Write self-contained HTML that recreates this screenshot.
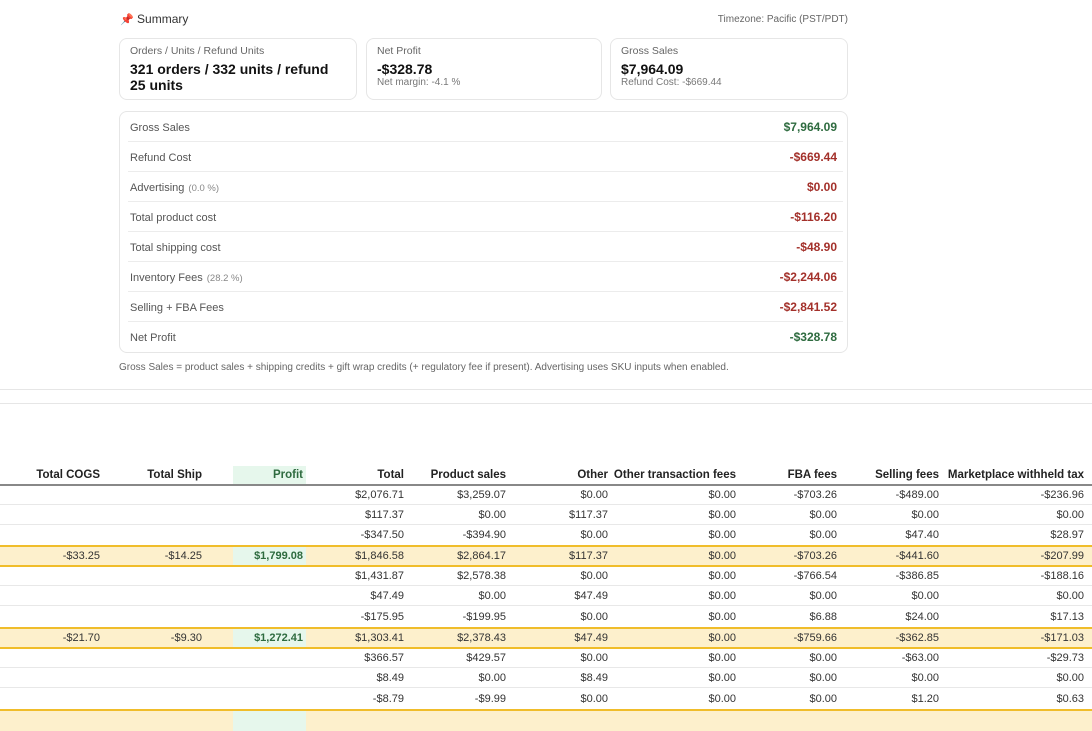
<!DOCTYPE html>
<html><head><meta charset="utf-8"><style>
*{margin:0;padding:0;box-sizing:border-box}
body{width:1092px;height:715px;overflow:hidden;background:#fff;font-family:"Liberation Sans",sans-serif;color:#222;position:relative}
.a{position:absolute}
.card{position:absolute;top:38px;height:62px;border:1px solid #e6e6e6;border-radius:8px;padding:6px 10px}
.card .l{font-size:10.5px;color:#666}
.card .v{font-size:14px;font-weight:bold;color:#111;margin-top:4px;line-height:16px}
.card .s{font-size:10px;color:#777}
.box{position:absolute;left:119px;top:111px;width:729px;height:242px;border:1px solid #e6e6e6;border-radius:8px}
.br{position:absolute;left:8px;right:4px;height:30px;border-bottom:1px solid #ececec;font-size:11px;color:#555}
.br span.t{position:absolute;left:2px;top:10px}
.br span.t small{font-size:9.5px;color:#888;margin-left:4px}
.br b{position:absolute;right:6px;top:8px;font-size:12px}
.g{color:#2e6b3f}.r{color:#a3302a}
.row{position:absolute;left:0;width:1092px;border-bottom:1px solid #e8e8e8;font-size:11px;color:#333}
.row span{position:absolute;top:50%;transform:translateY(-50%);text-align:right;white-space:nowrap}
.hl{background:#fdf0cc;border-top:2px solid #f0bd2a;border-bottom:2px solid #f0bd2a}
.pf{background:#e6f7ec;left:233px;width:73px;top:0;bottom:0;position:absolute}
.hdr span{font-weight:bold;font-size:11.5px;color:#222}
</style></head><body>
<div class="a" style="left:120px;top:12px;font-size:12px;color:#333"><span style="color:#d33;font-size:11px">📌</span>&nbsp;Summary</div>
<div class="a" style="right:244px;top:14px;font-size:10px;color:#666">Timezone: Pacific (PST/PDT)</div>
<div class="card" style="left:119px;width:238px"><div class="l">Orders / Units / Refund Units</div><div class="v">321 orders / 332 units / refund 25 units</div></div>
<div class="card" style="left:366px;width:236px"><div class="l">Net Profit</div><div class="v">-$328.78</div><div class="s">Net margin: -4.1 %</div></div>
<div class="card" style="left:610px;width:238px"><div class="l">Gross Sales</div><div class="v">$7,964.09</div><div class="s">Refund Cost: -$669.44</div></div>
<div class="box">
<div class="br" style="top:0"><span class="t">Gross Sales</span><b class="g">$7,964.09</b></div>
<div class="br" style="top:30px"><span class="t">Refund Cost</span><b class="r">-$669.44</b></div>
<div class="br" style="top:60px"><span class="t">Advertising<small>(0.0 %)</small></span><b class="r">$0.00</b></div>
<div class="br" style="top:90px"><span class="t">Total product cost</span><b class="r">-$116.20</b></div>
<div class="br" style="top:120px"><span class="t">Total shipping cost</span><b class="r">-$48.90</b></div>
<div class="br" style="top:150px"><span class="t">Inventory Fees<small>(28.2 %)</small></span><b class="r">-$2,244.06</b></div>
<div class="br" style="top:180px"><span class="t">Selling + FBA Fees</span><b class="r">-$2,841.52</b></div>
<div class="br" style="top:210px;border-bottom:none"><span class="t">Net Profit</span><b class="g">-$328.78</b></div>
</div>
<div class="a" style="left:119px;top:362px;font-size:10px;color:#666">Gross Sales = product sales + shipping credits + gift wrap credits (+ regulatory fee if present). Advertising uses SKU inputs when enabled.</div>
<div class="a" style="left:0;top:389px;width:1092px;height:1px;background:#e6e6e6"></div>
<div class="a" style="left:0;top:403px;width:1092px;height:1px;background:#e6e6e6"></div>

<div class="row hdr" style="top:466px;height:20px;border-bottom:2px solid #888"><div class="pf"></div>
<span style="right:992px">Total COGS</span><span style="right:890px">Total Ship</span><span style="right:789px;color:#2e6b3f">Profit</span><span style="right:688px">Total</span><span style="right:586px">Product sales</span><span style="right:484px">Other</span><span style="right:356px">Other transaction fees</span><span style="right:255px">FBA fees</span><span style="right:153px">Selling fees</span><span style="right:8px">Marketplace withheld tax</span></div>

<div class="row" style="top:486px;height:19px"><span style="right:688px">$2,076.71</span><span style="right:586px">$3,259.07</span><span style="right:484px">$0.00</span><span style="right:356px">$0.00</span><span style="right:255px">-$703.26</span><span style="right:153px">-$489.00</span><span style="right:8px">-$236.96</span></div>
<div class="row" style="top:505px;height:20px"><span style="right:688px">$117.37</span><span style="right:586px">$0.00</span><span style="right:484px">$117.37</span><span style="right:356px">$0.00</span><span style="right:255px">$0.00</span><span style="right:153px">$0.00</span><span style="right:8px">$0.00</span></div>
<div class="row" style="top:525px;height:20px;border-bottom:none"><span style="right:688px">-$347.50</span><span style="right:586px">-$394.90</span><span style="right:484px">$0.00</span><span style="right:356px">$0.00</span><span style="right:255px">$0.00</span><span style="right:153px">$47.40</span><span style="right:8px">$28.97</span></div>
<div class="row hl" style="top:545px;height:22px"><div class="pf"></div><span style="right:992px">-$33.25</span><span style="right:890px">-$14.25</span><span style="right:789px;color:#2e6b3f;font-weight:bold">$1,799.08</span><span style="right:688px">$1,846.58</span><span style="right:586px">$2,864.17</span><span style="right:484px">$117.37</span><span style="right:356px">$0.00</span><span style="right:255px">-$703.26</span><span style="right:153px">-$441.60</span><span style="right:8px">-$207.99</span></div>
<div class="row" style="top:567px;height:19px"><span style="right:688px">$1,431.87</span><span style="right:586px">$2,578.38</span><span style="right:484px">$0.00</span><span style="right:356px">$0.00</span><span style="right:255px">-$766.54</span><span style="right:153px">-$386.85</span><span style="right:8px">-$188.16</span></div>
<div class="row" style="top:586px;height:20px"><span style="right:688px">$47.49</span><span style="right:586px">$0.00</span><span style="right:484px">$47.49</span><span style="right:356px">$0.00</span><span style="right:255px">$0.00</span><span style="right:153px">$0.00</span><span style="right:8px">$0.00</span></div>
<div class="row" style="top:606px;height:21px;border-bottom:none"><span style="right:688px">-$175.95</span><span style="right:586px">-$199.95</span><span style="right:484px">$0.00</span><span style="right:356px">$0.00</span><span style="right:255px">$6.88</span><span style="right:153px">$24.00</span><span style="right:8px">$17.13</span></div>
<div class="row hl" style="top:627px;height:22px"><div class="pf"></div><span style="right:992px">-$21.70</span><span style="right:890px">-$9.30</span><span style="right:789px;color:#2e6b3f;font-weight:bold">$1,272.41</span><span style="right:688px">$1,303.41</span><span style="right:586px">$2,378.43</span><span style="right:484px">$47.49</span><span style="right:356px">$0.00</span><span style="right:255px">-$759.66</span><span style="right:153px">-$362.85</span><span style="right:8px">-$171.03</span></div>
<div class="row" style="top:649px;height:19px"><span style="right:688px">$366.57</span><span style="right:586px">$429.57</span><span style="right:484px">$0.00</span><span style="right:356px">$0.00</span><span style="right:255px">$0.00</span><span style="right:153px">-$63.00</span><span style="right:8px">-$29.73</span></div>
<div class="row" style="top:668px;height:20px"><span style="right:688px">$8.49</span><span style="right:586px">$0.00</span><span style="right:484px">$8.49</span><span style="right:356px">$0.00</span><span style="right:255px">$0.00</span><span style="right:153px">$0.00</span><span style="right:8px">$0.00</span></div>
<div class="row" style="top:688px;height:21px;border-bottom:none"><span style="right:688px">-$8.79</span><span style="right:586px">-$9.99</span><span style="right:484px">$0.00</span><span style="right:356px">$0.00</span><span style="right:255px">$0.00</span><span style="right:153px">$1.20</span><span style="right:8px">$0.63</span></div>
<div class="row hl" style="top:709px;height:22px;border-bottom:none"><div class="pf"></div></div>
</body></html>
